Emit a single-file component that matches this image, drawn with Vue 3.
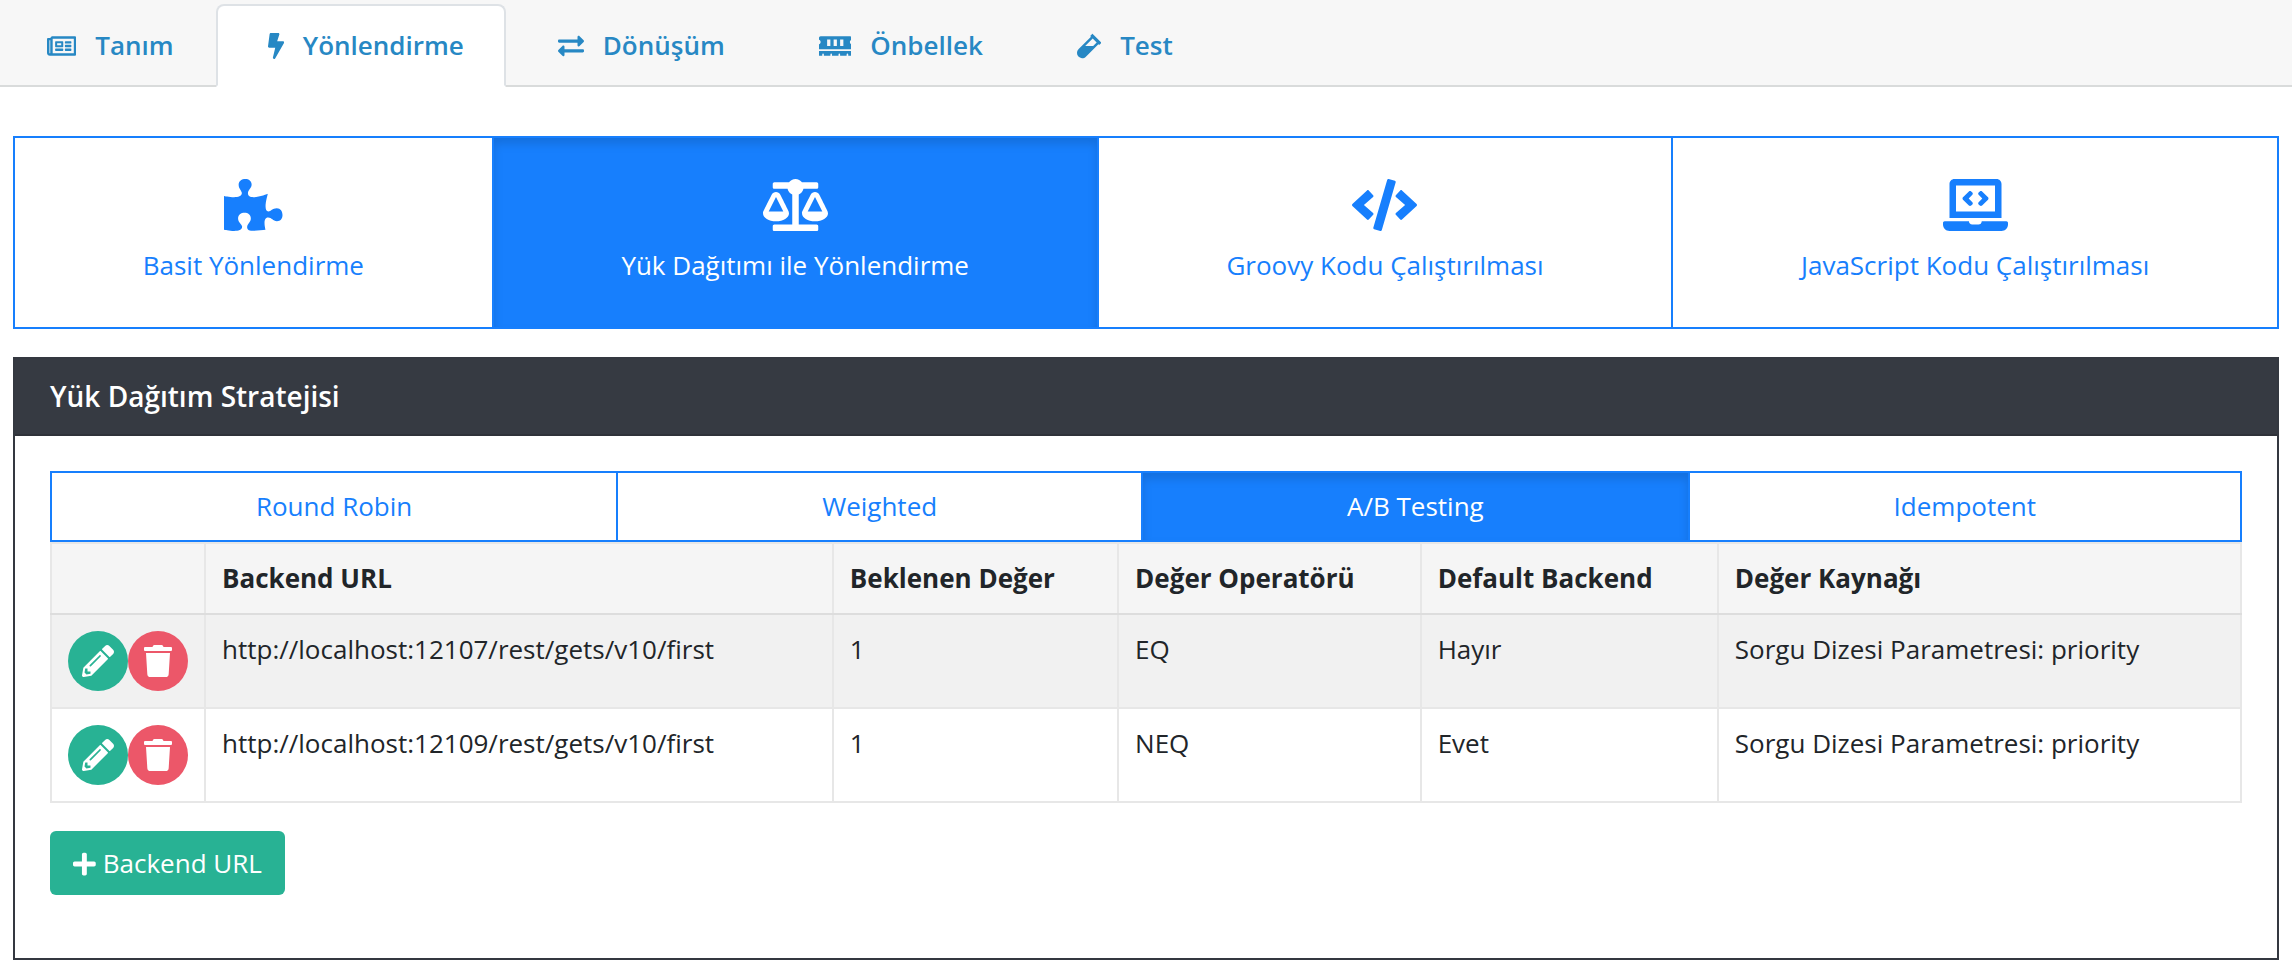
<script setup>
import { ref } from 'vue'

const icons = {
  newspaper: { w: 576, d: 'M552 64H112c-20.858 0-38.643 13.377-45.248 32H24c-13.255 0-24 10.745-24 24v272c0 30.928 25.072 56 56 56h496c13.255 0 24-10.745 24-24V88c0-13.255-10.745-24-24-24zM48 392V144h16v248c0 4.411-3.589 8-8 8s-8-3.589-8-8zm480 8H111.422c.374-2.614.578-5.283.578-8V112h416v288zM172 280h136c6.627 0 12-5.373 12-12v-96c0-6.627-5.373-12-12-12H172c-6.627 0-12 5.373-12 12v96c0 6.627 5.373 12 12 12zm28-80h80v40h-80v-40zm-40 140v-24c0-6.627 5.373-12 12-12h136c6.627 0 12 5.373 12 12v24c0 6.627-5.373 12-12 12H172c-6.627 0-12-5.373-12-12zm192 0v-24c0-6.627 5.373-12 12-12h104c6.627 0 12 5.373 12 12v24c0 6.627-5.373 12-12 12H364c-6.627 0-12-5.373-12-12zm0-144v-24c0-6.627 5.373-12 12-12h104c6.627 0 12 5.373 12 12v24c0 6.627-5.373 12-12 12H364c-6.627 0-12-5.373-12-12zm0 72v-24c0-6.627 5.373-12 12-12h104c6.627 0 12 5.373 12 12v24c0 6.627-5.373 12-12 12H364c-6.627 0-12-5.373-12-12z' },
  bolt: { w: 320, d: 'M296 160H180.6l42.6-129.8C227.2 15 215.7 0 200 0H56C44 0 33.8 8.9 32.2 20.8l-32 240C-1.7 275.2 9.5 288 24 288h118.7L96.6 482.5c-3.6 15.2 8 29.5 23.3 29.5 8.4 0 16.4-4.4 20.8-12l176-304c9.3-15.9-2.2-36-20.7-36z' },
  exchange: { w: 512, d: 'M0 168v-16c0-13.255 10.745-24 24-24h360V80c0-21.367 25.899-32.042 40.971-16.971l80 80c9.372 9.373 9.372 24.569 0 33.941l-80 80C409.956 271.982 384 261.456 384 240v-48H24c-13.255 0-24-10.745-24-24zm488 152H128v-48c0-21.314-25.862-32.08-40.971-16.971l-80 80c-9.372 9.373-9.372 24.569 0 33.941l80 80C102.057 463.997 128 453.437 128 432v-48h360c13.255 0 24-10.745 24-24v-16c0-13.255-10.745-24-24-24z' },
  memory: { w: 640, d: 'M640 130.94V96c0-17.67-14.33-32-32-32H32C14.33 64 0 78.33 0 96v34.94c18.6 6.61 32 24.19 32 45.06s-13.4 38.45-32 45.06V320h640v-98.94c-18.6-6.61-32-24.19-32-45.06s13.4-38.45 32-45.06zM224 256h-64V128h64v128zm128 0h-64V128h64v128zm128 0h-64V128h64v128zM0 448h64v-26.67c0-8.84 7.16-16 16-16s16 7.16 16 16V448h128v-26.67c0-8.84 7.16-16 16-16s16 7.16 16 16V448h128v-26.67c0-8.84 7.16-16 16-16s16 7.16 16 16V448h128v-26.67c0-8.84 7.16-16 16-16s16 7.16 16 16V448h64v-96H0v96z' },
  vial: { w: 480, d: 'M477.7 186.1L309.5 18.3c-3.1-3.1-8.2-3.1-11.3 0l-34 33.9c-3.1 3.1-3.1 8.2 0 11.3l11.2 11.1L33 316.5c-38.8 38.7-45.1 102-9.4 143.5 20.6 24 49.5 36 78.4 35.9 26.4 0 52.8-10 72.9-30.1l246.3-245.7 11.2 11.1c3.1 3.1 8.2 3.1 11.3 0l34-33.9c3.1-3 3.1-8.1 0-11.2zM318 256H161l148-147.7 78.5 78.3L318 256z' },
  puzzle: { w: 576, d: 'M519.442 288.651c-41.519 0-59.5 31.593-82.058 31.593C377.409 320.244 432 144 432 144s-196.288 80-196.288-3.297c0-35.827 36.288-46.25 36.288-85.985C272 19.216 243.885 0 210.539 0c-34.654 0-66.366 18.891-66.366 56.346 0 41.364 31.711 59.277 31.711 81.75C175.885 207.719 0 166.758 0 166.758v333.237s178.635 41.047 178.635-28.662c0-22.473-40-40.107-40-81.471 0-37.456 29.25-56.346 63.577-56.346 33.673 0 61.788 19.216 61.788 54.717 0 39.735-36.288 50.158-36.288 85.985 0 60.803 129.675 25.73 181.23 25.73 0 0-34.725-120.101 25.827-120.101 35.962 0 46.423 36.152 86.308 36.152C556.712 416 576 387.99 576 354.443c0-34.199-18.962-65.792-56.558-65.792z' },
  scale: { w: 640, d: 'M256 336h-.02c0-16.18 1.34-8.73-85.05-181.51-17.65-35.29-68.19-35.36-85.87 0C-2.06 328.75.02 320.33.02 336H0c0 44.18 57.31 80 128 80s128-35.82 128-80zM128 176l72 144H56l72-144zm511.98 160c0-16.18 1.34-8.73-85.05-181.51-17.65-35.29-68.19-35.36-85.87 0-87.12 174.26-85.04 165.84-85.04 181.51H384c0 44.18 57.31 80 128 80s128-35.82 128-80h-.02zM440 320l72-144 72 144H440zm88 128H352V153.25c23.51-10.29 41.16-31.48 46.39-57.25H528c8.84 0 16-7.16 16-16V48c0-8.84-7.16-16-16-16H383.64C369.04 12.68 346.09 0 320 0s-49.04 12.68-63.64 32H112c-8.84 0-16 7.16-16 16v32c0 8.84 7.16 16 16 16h129.61c5.23 25.76 22.87 46.96 46.39 57.25V448H112c-8.84 0-16 7.16-16 16v32c0 8.84 7.16 16 16 16h416c8.84 0 16-7.16 16-16v-32c0-8.84-7.16-16-16-16z' },
  code: { w: 640, d: 'M278.9 511.5l-61-17.7c-6.4-1.8-10-8.5-8.2-14.9L346.2 8.7c1.8-6.4 8.5-10 14.9-8.2l61 17.7c6.4 1.8 10 8.5 8.2 14.9L293.8 503.3c-1.9 6.4-8.5 10.1-14.9 8.2zm-114-112.2l43.5-46.4c4.6-4.9 4.3-12.7-.8-17.2L117 256l90.6-79.7c5.1-4.5 5.5-12.3.8-17.2l-43.5-46.4c-4.5-4.8-12.1-5.1-17-.5L3.8 247.2c-5.1 4.7-5.1 12.8 0 17.5l144.1 135.1c4.9 4.6 12.5 4.4 17-.5zm327.2.6l144.1-135.1c5.1-4.7 5.1-12.8 0-17.5L492.1 112.1c-4.8-4.5-12.4-4.3-17 .5L431.6 159c-4.6 4.9-4.3 12.7.8 17.2L523 256l-90.6 79.7c-5.1 4.5-5.5 12.3-.8 17.2l43.5 46.4c4.5 4.9 12.1 5.1 17 .6z' },
  laptop: { w: 640, d: 'M255.03 261.65c6.25 6.25 16.38 6.25 22.63 0l11.31-11.31c6.25-6.25 6.25-16.38 0-22.63L253.25 192l35.71-35.72c6.25-6.25 6.25-16.38 0-22.63l-11.31-11.31c-6.25-6.25-16.38-6.25-22.63 0l-58.34 58.34c-6.25 6.25-6.25 16.38 0 22.63l58.35 58.34zm96.01-11.3l11.31 11.31c6.25 6.25 16.38 6.25 22.63 0l58.34-58.34c6.25-6.25 6.25-16.38 0-22.63l-58.34-58.34c-6.25-6.25-16.38-6.25-22.63 0l-11.31 11.31c-6.25 6.25-6.25 16.38 0 22.63L386.75 192l-35.71 35.72c-6.25 6.25-6.25 16.38 0 22.63zM624 416H381.54c-.74 19.81-14.71 32-32.74 32H288c-18.69 0-33.02-17.47-32.77-32H16c-8.8 0-16 7.2-16 16v16c0 35.2 28.8 64 64 64h512c35.2 0 64-28.8 64-64v-16c0-8.8-7.2-16-16-16zM576 48c0-26.4-21.6-48-48-48H112C85.6 0 64 21.6 64 48v336h512V48zm-64 272H128V64h384v256z' },
  pencil: { w: 512, d: 'M497.9 142.1l-46.1 46.1c-4.7 4.7-12.3 4.7-17 0l-111-111c-4.7-4.7-4.7-12.3 0-17l46.1-46.1c18.7-18.7 49.1-18.7 67.9 0l60.1 60.1c18.8 18.7 18.8 49.1 0 67.9zM284.2 99.8L21.6 362.4.4 483.9c-2.9 16.4 11.4 30.6 27.8 27.8l121.5-21.3 262.6-262.6c4.7-4.7 4.7-12.3 0-17l-111-111c-4.8-4.7-12.4-4.7-17.1 0zM124.1 339.9c-5.5-5.5-5.5-14.3 0-19.8l154-154c5.5-5.5 14.3-5.5 19.8 0s5.5 14.3 0 19.8l-154 154c-5.5 5.5-14.3 5.5-19.8 0zM88 424h48v36.3l-64.5 11.3-31.1-31.1L51.7 376H88v48z' },
  trash: { w: 448, d: 'M432 32H312l-9.4-18.7A24 24 0 0 0 281.1 0H166.8a23.72 23.72 0 0 0-21.4 13.3L136 32H16A16 16 0 0 0 0 48v32a16 16 0 0 0 16 16h416a16 16 0 0 0 16-16V48a16 16 0 0 0-16-16zM53.2 467a48 48 0 0 0 47.9 45h245.8a48 48 0 0 0 47.9-45L416 128H32z' },
  plus: { w: 448, d: 'M416 208H272V64c0-17.67-14.33-32-32-32h-32c-17.67 0-32 14.33-32 32v144H32c-17.67 0-32 14.33-32 32v32c0 17.67 14.33 32 32 32h144v144c0 17.67 14.33 32 32 32h32c17.67 0 32-14.33 32-32V304h144c17.67 0 32-14.33 32-32v-32c0-17.67-14.33-32-32-32z' },
}

const tabs = [
  { label: 'Tanım', icon: icons.newspaper },
  { label: 'Yönlendirme', icon: icons.bolt },
  { label: 'Dönüşüm', icon: icons.exchange },
  { label: 'Önbellek', icon: icons.memory },
  { label: 'Test', icon: icons.vial },
]
const modes = [
  { label: 'Basit Yönlendirme', icon: icons.puzzle },
  { label: 'Yük Dağıtımı ile Yönlendirme', icon: icons.scale },
  { label: 'Groovy Kodu Çalıştırılması', icon: icons.code },
  { label: 'JavaScript Kodu Çalıştırılması', icon: icons.laptop },
]
const strategies = ['Round Robin', 'Weighted', 'A/B Testing', 'Idempotent']
const columns = ['Backend URL', 'Beklenen Değer', 'Değer Operatörü', 'Default Backend', 'Değer Kaynağı']
const rows = [
  ['http://localhost:12107/rest/gets/v10/first', '1', 'EQ', 'Hayır', 'Sorgu Dizesi Parametresi: priority'],
  ['http://localhost:12109/rest/gets/v10/first', '1', 'NEQ', 'Evet', 'Sorgu Dizesi Parametresi: priority'],
]

const activeTab = ref(1)
const activeMode = ref(1)
const activeStrategy = ref(2)
</script>

<template>
  <div class="page">
    <nav class="tab-bar">
      <a
        v-for="(tab, i) in tabs"
        :key="tab.label"
        href="#"
        class="tab"
        :class="{ active: i === activeTab }"
        @click.prevent="activeTab = i"
      >
        <svg class="icon" :viewBox="`0 0 ${tab.icon.w} 512`" aria-hidden="true"><path :d="tab.icon.d" /></svg>
        <span>{{ tab.label }}</span>
      </a>
    </nav>

    <main class="content">
      <div class="group" role="group" aria-label="Yönlendirme">
        <button
          v-for="(mode, i) in modes"
          :key="mode.label"
          type="button"
          class="choice mode"
          :class="{ active: i === activeMode }"
          :aria-pressed="i === activeMode"
          @click="activeMode = i"
        >
          <svg class="icon large" :viewBox="`0 0 ${mode.icon.w} 512`" aria-hidden="true"><path :d="mode.icon.d" /></svg>
          <span>{{ mode.label }}</span>
        </button>
      </div>

      <section class="panel">
        <h2 class="panel-title">Yük Dağıtım Stratejisi</h2>
        <div class="panel-body">
          <div class="group" role="group" aria-label="Yük Dağıtım Stratejisi">
            <button
              v-for="(name, i) in strategies"
              :key="name"
              type="button"
              class="choice strategy"
              :class="{ active: i === activeStrategy }"
              :aria-pressed="i === activeStrategy"
              @click="activeStrategy = i"
            >{{ name }}</button>
          </div>

          <table class="backends">
            <thead>
              <tr>
                <th class="actions-col"></th>
                <th v-for="col in columns" :key="col" scope="col">{{ col }}</th>
              </tr>
            </thead>
            <tbody>
              <tr v-for="row in rows" :key="row[0]">
                <td class="actions-col">
                  <div class="actions">
                    <button type="button" class="round edit" aria-label="Düzenle">
                      <svg class="icon medium" :viewBox="`0 0 ${icons.pencil.w} 512`" aria-hidden="true"><path :d="icons.pencil.d" /></svg>
                    </button>
                    <button type="button" class="round remove" aria-label="Sil">
                      <svg class="icon medium" :viewBox="`0 0 ${icons.trash.w} 512`" aria-hidden="true"><path :d="icons.trash.d" /></svg>
                    </button>
                  </div>
                </td>
                <td v-for="(cell, c) in row" :key="c">{{ cell }}</td>
              </tr>
            </tbody>
          </table>

          <button type="button" class="add">
            <svg class="icon" :viewBox="`0 0 ${icons.plus.w} 512`" aria-hidden="true"><path :d="icons.plus.d" /></svg>
            <span>Backend URL</span>
          </button>
        </div>
      </section>
    </main>
  </div>
</template>

<style>
body {
  margin: 0;
  background: #fff;
}
</style>

<style scoped>
.page {
  font-family: "Open Sans", "Noto Sans", sans-serif;
  font-size: 26px;
  line-height: 37px;
  color: #212529;
}
.page *,
.page {
  box-sizing: border-box;
}
button {
  font: inherit;
  margin: 0;
  cursor: pointer;
}
.icon {
  display: block;
  flex: none;
  height: 26px;
  width: auto;
  fill: currentColor;
}
.icon.medium {
  height: 32px;
}
.icon.large {
  height: 52px;
}

.tab-bar {
  display: flex;
  padding-top: 4px;
  background: #f7f7f7;
  box-shadow: inset 0 -2px #d9dbdb;
}
.tab {
  display: flex;
  align-items: center;
  gap: 19px;
  padding: 21px 40px 21px 50px;
  border: 2px solid transparent;
  border-radius: 8px 8px 0 0;
  color: #2788c4;
  font-weight: 600;
  text-decoration: none;
}
.tab:first-child {
  padding-left: 45px;
}
.tab.active {
  background: #fff;
  border-color: #dee2e6 #dee2e6 #fff;
}

.content {
  padding: 49px 13px 10px;
}
.group {
  display: flex;
}
.choice {
  flex: 1 1 auto;
  padding: 15px 24px;
  border: 2px solid #177ffd;
  border-radius: 0;
  background: #fff;
  color: #177ffd;
  text-align: center;
}
.choice + .choice {
  margin-left: -2px;
}
.choice.active {
  background: #177ffd;
  color: #fff;
  box-shadow: inset 0 6px 10px rgba(0, 0, 0, 0.125);
}
.mode {
  display: flex;
  flex-direction: column;
  align-items: center;
  gap: 16px;
  padding: 41px 24px 43px;
}

.panel {
  margin-top: 28px;
  border: 2px solid #343840;
}
.panel-title {
  margin: 0;
  padding: 19px 35px;
  border-bottom: 2px solid #2f3239;
  background: #363a42;
  color: #fff;
  font-size: 28px;
  line-height: 37px;
  font-weight: 600;
}
.panel-body {
  padding: 35px 35px 63px;
}

.backends {
  width: 100%;
  border-collapse: collapse;
}
.backends th,
.backends td {
  padding: 16px;
  border: 2px solid #e7e7e7;
  text-align: left;
  vertical-align: top;
}
.backends th {
  background: #f5f5f5;
  border-bottom-color: #ddd;
  font-weight: 700;
}
.backends tbody tr:nth-child(odd) {
  background: #f1f1f1;
}
.backends .actions-col {
  width: 154px;
}
.actions {
  display: flex;
}
.round {
  display: flex;
  align-items: center;
  justify-content: center;
  flex: none;
  width: 60px;
  height: 60px;
  padding: 0;
  border: 0;
  border-radius: 50%;
  color: #fff;
}
.edit {
  background: #28b294;
}
.remove {
  background: #ec5769;
}
.add {
  display: flex;
  align-items: center;
  gap: 7px;
  margin-top: 28px;
  padding: 14px 23px 13px;
  border: 0;
  border-radius: 6px;
  background: #28b294;
  color: #fff;
}
</style>
